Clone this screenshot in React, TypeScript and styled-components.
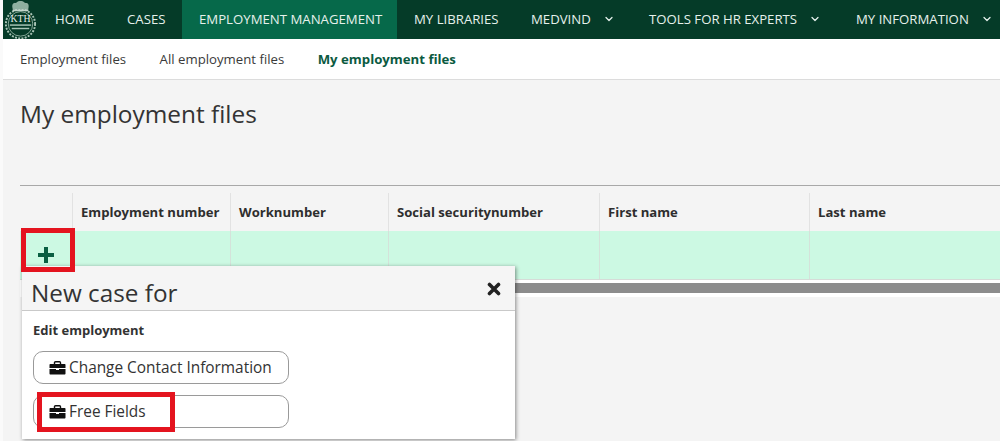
import React from "react";
import styled, { createGlobalStyle } from "styled-components";
import { ChevronDown } from "lucide-react";

const Global = createGlobalStyle`
  html, body { margin: 0; padding: 0; background: #fafafa; }
  body { width: 1000px; height: 441px; overflow: hidden; font-family: "Open Sans", "Noto Sans", sans-serif; }
  * { box-sizing: border-box; }
`;

const Page = styled.div`
  width: 1000px;
  height: 441px;
  padding-left: 3px;
  overflow: hidden;
`;

const TopBar = styled.nav`
  height: 39px;
  display: flex;
  align-items: stretch;
  background: #053b28;
`;

const Logo = styled.div`
  width: 35px;
  flex: none;
  display: flex;
  align-items: center;
  justify-content: center;
`;

const NavItem = styled.a<{ $active?: boolean; $w: number }>`
  width: ${(p) => p.$w}px;
  flex: none;
  display: flex;
  align-items: center;
  gap: 12px;
  padding: 0 0 1px 17px;
  font-size: 13.2px;
  color: #e6f1ec;
  background: ${(p) => (p.$active ? "#06694a" : "transparent")};
  white-space: nowrap;
`;

const SubBar = styled.div`
  height: 41px;
  display: flex;
  align-items: center;
  gap: 33.5px;
  padding-left: 17px;
  background: #fff;
  border-bottom: 1px solid #dcdcdc;
`;

const SubLink = styled.a<{ $active?: boolean }>`
  font-size: 13.2px;
  font-weight: ${(p) => (p.$active ? 700 : 400)};
  color: ${(p) => (p.$active ? "#0b5a41" : "#3a3a3a")};
`;

const Content = styled.main`
  height: 361px;
  padding: 16px 0 0 17px;
  background: #f4f4f4;
  display: flex;
  flex-direction: column;
`;

const Title = styled.h1`
  margin: 0;
  height: 89px;
  font-size: 24.4px;
  line-height: 36px;
  font-weight: 400;
  color: #333;
`;

const Grid = styled.div`
  position: relative;
  border-top: 1px solid #a8a8a8;
`;

const cols = "52px 158px 158px 211px 210px 1fr";

const HeadRow = styled.div`
  display: grid;
  grid-template-columns: ${cols};
  height: 45px;
  padding-top: 7px;
`;

const HeadCell = styled.div`
  display: flex;
  align-items: center;
  padding-left: 8px;
  font-size: 13.1px;
  font-weight: 700;
  color: #2e2e2e;
  border-left: 1px solid #e2e2e2;
  &:first-child { border-left: 0; }
`;

const BodyRow = styled.div`
  display: grid;
  grid-template-columns: ${cols};
  height: 49px;
  background: #ccf9e3;
  border-bottom: 1px solid #d6dcd8;
`;

const BodyCell = styled.div`
  border-left: 1px solid #d4e2da;
  &:first-child { border-left: 0; }
`;

const ScrollArea = styled.div`
  height: 17px;
  padding: 3px 0 0 4px;
  background: #fff;
`;

const Scrollbar = styled.div`
  height: 10px;
  background: #8c8c8c;
`;

const Highlight = styled.div`
  position: absolute;
  left: 1px;
  top: 42px;
  width: 54px;
  height: 44px;
  border: 5px solid #e4141f;
  display: flex;
  align-items: flex-end;
  justify-content: center;
  padding: 0 5px 4px 0;
`;

const Popover = styled.section`
  position: absolute;
  left: 2px;
  top: 80px;
  width: 493px;
  height: 173px;
  background: #fff;
  box-shadow: 1px 1px 4px rgba(0, 0, 0, 0.45);
`;

const PopHeader = styled.header`
  height: 45px;
  display: flex;
  align-items: center;
  justify-content: space-between;
  padding: 8px 14px 0 9px;
  background: #f5f5f5;
  border-bottom: 1px solid #c9c9c9;
  font-size: 24.3px;
  color: #333;
`;

const CloseButton = styled.span`
  display: flex;
  margin-top: -6px;
`;

const PopBody = styled.div`
  padding: 11px 0 0 11px;
  display: flex;
  flex-direction: column;
`;

const PopLabel = styled.div`
  font-size: 13px;
  font-weight: 700;
  color: #333;
  line-height: 17px;
  margin-bottom: 12px;
`;

const CaseButton = styled.button`
  width: 256px;
  height: 33px;
  margin-bottom: 11px;
  display: flex;
  align-items: center;
  gap: 3px;
  padding: 0 0 0 15px;
  background: #fff;
  border: 1px solid #9a9a9a;
  border-radius: 10px;
  font-family: inherit;
  font-size: 15.4px;
  color: #333;
`;

const ButtonHighlight = styled.div`
  position: absolute;
  left: 17px;
  top: 206px;
  width: 138px;
  height: 40px;
  border: 5px solid #e4141f;
`;

const KthLogo = () => (
  <svg width="36" height="39" viewBox="0 0 36 39" aria-hidden="true">
    <g fill="none" stroke="#a9c4b6">
      <circle cx="18" cy="24" r="15" strokeWidth="2" strokeDasharray="2 1.4" />
      <circle cx="18" cy="24" r="12.6" strokeWidth="0.8" />
    </g>
    <path d="M10 9 C8 1 13 3 14 2 C16 0 20 0 22 2 C23 3 28 1 26 9 Z" fill="#8fb0a0" />
    <rect x="10" y="9" width="16" height="2" fill="#c4d6cc" />
    <text x="18" y="22.5" textAnchor="middle" fontFamily="Liberation Serif, serif" fontSize="10" fill="#e4eee9">KTH</text>
    <rect x="7" y="24.5" width="22" height="1.5" fill="#a9c4b6" />
    <rect x="9" y="28" width="18" height="1.5" fill="#a9c4b6" />
  </svg>
);

const Plus = () => (
  <svg width="16" height="16" viewBox="0 0 16 16" aria-hidden="true">
    <path d="M8 0v16M0 8h16" stroke="#0a5f42" strokeWidth="4" />
  </svg>
);

const Close = () => (
  <svg width="14" height="14" viewBox="0 0 14 14" aria-hidden="true">
    <path d="M2.5 2.5l9 9M11.5 2.5l-9 9" stroke="#222" strokeWidth="3.6" strokeLinecap="round" />
  </svg>
);

const Briefcase = () => (
  <svg width="17" height="14" viewBox="0 0 17 14" aria-hidden="true">
    <path d="M5.5 3V1.8c0-.6.4-1 1-1h4c.6 0 1 .4 1 1V3" fill="none" stroke="#111" strokeWidth="1.4" />
    <path d="M1.5 3h14c.6 0 1 .4 1 1v3H.5V4c0-.6.4-1 1-1z" fill="#111" />
    <path d="M.5 8h6.5v1h3V8h6.5v4.5c0 .6-.4 1-1 1h-14c-.6 0-1-.4-1-1z" fill="#111" />
  </svg>
);

const headers = ["", "Employment number", "Worknumber", "Social securitynumber", "First name", "Last name"];

const navItems = [
  { label: "HOME", w: 72 },
  { label: "CASES", w: 72 },
  { label: "EMPLOYMENT MANAGEMENT", w: 215, active: true },
  { label: "MY LIBRARIES", w: 117 },
  { label: "MEDVIND", w: 118, chevron: true },
  { label: "TOOLS FOR HR EXPERTS", w: 207, chevron: true },
  { label: "MY INFORMATION", w: 161, chevron: true },
];

export default function App() {
  return (
    <Page>
      <Global />
      <TopBar>
        <Logo><KthLogo /></Logo>
        {navItems.map((n) => (
          <NavItem key={n.label} $w={n.w} $active={n.active}>
            {n.label}
            {n.chevron && <ChevronDown size={12} strokeWidth={2.5} />}
          </NavItem>
        ))}
      </TopBar>
      <SubBar>
        <SubLink>Employment files</SubLink>
        <SubLink>All employment files</SubLink>
        <SubLink $active>My employment files</SubLink>
      </SubBar>
      <Content>
        <Title>My employment files</Title>
        <Grid>
          <HeadRow>
            {headers.map((h, i) => <HeadCell key={i}>{h}</HeadCell>)}
          </HeadRow>
          <BodyRow>
            {headers.map((_, i) => <BodyCell key={i} />)}
          </BodyRow>
          <ScrollArea><Scrollbar /></ScrollArea>
          <Popover>
            <PopHeader>
              New case for
              <CloseButton><Close /></CloseButton>
            </PopHeader>
            <PopBody>
              <PopLabel>Edit employment</PopLabel>
              <CaseButton><Briefcase />Change Contact Information</CaseButton>
              <CaseButton><Briefcase />Free Fields</CaseButton>
            </PopBody>
          </Popover>
          <Highlight><Plus /></Highlight>
          <ButtonHighlight />
        </Grid>
      </Content>
    </Page>
  );
}
